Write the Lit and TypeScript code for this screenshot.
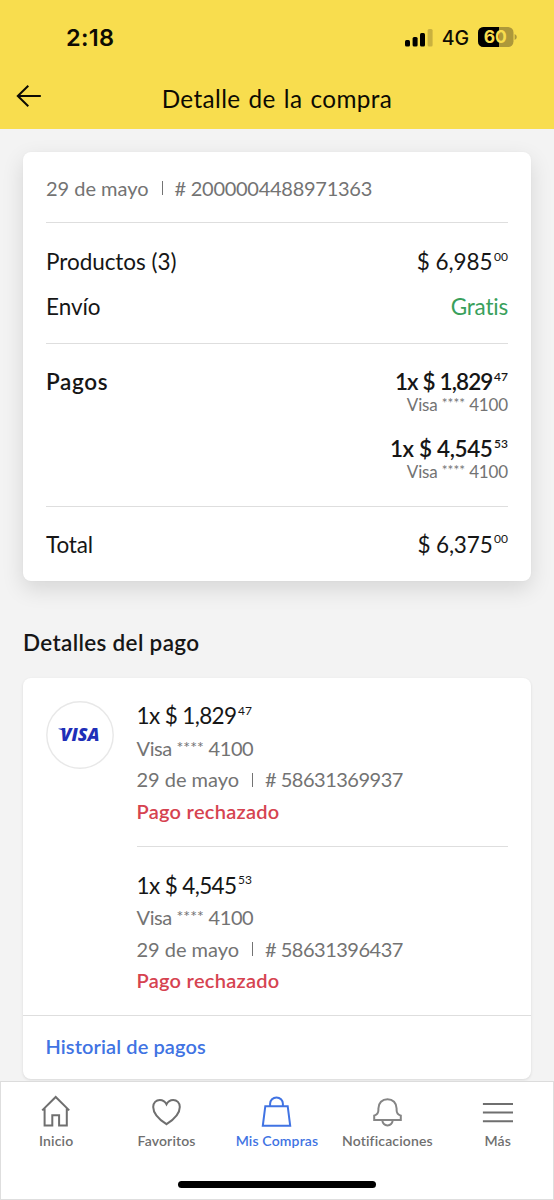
import { LitElement, html, svg, css, TemplateResult } from "lit";
import { customElement } from "lit/decorators.js";

interface Payment {
  whole: string;
  cents: string;
  operation: string;
}

const payments: Payment[] = [
  { whole: "1,829", cents: "47", operation: "58631369937" },
  { whole: "4,545", cents: "53", operation: "58631396437" },
];

const icons: Record<string, TemplateResult> = {
  home: svg`<path d="M1.2 15.4 14.7 2 28.2 15.4M3.6 13.2V30.6H11.3V20.3H18.1V30.6H25.8V13.2" />`,
  heart: svg`<path d="M15.5 29.2C9 25 2.2 18.6 2.2 11.9C2.2 7.8 5.1 5 8.8 5C11.8 5 14.1 6.6 15.5 9.3C16.9 6.6 19.2 5 22.2 5C25.9 5 28.8 7.8 28.8 11.9C28.8 18.6 22 25 15.5 29.2Z" />`,
  bag: svg`<path d="M4.3 11.2H26.7L29.2 30.8H1.8ZM9.1 11V8.8A6.4 6.4 0 0 1 21.9 8.8V11" />`,
  bell: svg`<path d="M2.2 25V20.6C5.6 19.6 6.4 18.2 6.4 15V13.6C6.4 8 10.2 4.2 15.5 4.2S24.6 8 24.6 13.6V15C24.6 18.2 25.4 19.6 28.8 20.6V25ZM10.2 25.2C10.7 28.5 12.6 30.4 15.5 30.4S20.3 28.5 20.8 25.2" />`,
  menu: svg`<path d="M.9 8.9H31M.9 17.6H31M.9 26.3H31" />`,
};

const tabs = [
  { icon: "home", label: "Inicio" },
  { icon: "heart", label: "Favoritos" },
  { icon: "bag", label: "Mis Compras" },
  { icon: "bell", label: "Notificaciones" },
  { icon: "menu", label: "Más" },
];

@customElement("app-root")
export class AppRoot extends LitElement {
  static styles = css`
    :host {
      display: flex;
      flex-direction: column;
      box-sizing: border-box;
      width: 554px;
      height: 1200px;
      overflow: hidden;
      background: #f3f3f3;
      color: #161616;
      font-family: Lato, "Open Sans", sans-serif;
      font-size: 22.5px;
      font-variant-ligatures: none;
      white-space: nowrap;
    }
    * { box-sizing: border-box; }
    svg { display: block; flex: none; }

    .header { height: 129px; flex: none; background: #f8dd4e; color: #0d0b03; }
    .status {
      display: flex;
      justify-content: space-between;
      align-items: center;
      height: 75px;
      padding: 0 37px 0 66px;
      font-family: Inter, sans-serif;
    }
    .time { font-size: 23.5px; font-weight: 600; letter-spacing: 0.3px; }
    .signals { display: flex; align-items: center; }
    .network { margin-left: 9px; font-size: 19.5px; font-weight: 500; letter-spacing: -0.1px; }
    .battery { margin: -1px 0 0 9px; }
    .titlebar { display: grid; grid-template-columns: 60px 1fr 60px; align-items: center; height: 46px; }
    .back { margin: -4px 0 0 16px; }
    .title { text-align: center; font-size: 24.3px; letter-spacing: 0.4px; word-spacing: 1.4px; }

    .content { flex: 1; min-height: 0; padding: 23px 23px 0; }
    .card { background: #fff; border-radius: 8px; }
    .summary { height: 429px; padding: 0 23px; box-shadow: 0 8px 22px rgba(0, 0, 0, 0.12), 0 0 2px rgba(0, 0, 0, 0.04); }
    .row { display: flex; justify-content: space-between; align-items: center; }
    .rule { height: 1px; background: #dedede; }

    .meta { display: flex; align-items: center; color: #737373; font-size: 20px; letter-spacing: -0.02px; }
    .bar { width: 1px; height: 14px; margin: 0 12px 0 13px; background: #737373; }
    .order { height: 70px; padding-top: 1px; }
    .number { letter-spacing: -0.27px; }
    .lines { padding: 15.5px 0 0; height: 120px; }
    .lines .row { height: 45.5px; letter-spacing: -0.05px; }
    .free { color: #39a05b; letter-spacing: -0.2px; }
    .strong { font-weight: 600; }
    .paid { display: flex; justify-content: space-between; height: 162px; padding-top: 22px; line-height: 32px; }
    .paid .strong { letter-spacing: 0.65px; }
    .charges { display: flex; flex-direction: column; align-items: flex-end; gap: 20.5px; }
    .charge { text-align: right; }
    .charge .amount { font-weight: 600; letter-spacing: -0.35px; }
    .charge:first-child .amount { letter-spacing: -0.85px; }
    .charge .card-name { line-height: 14.5px; font-size: 17px; letter-spacing: -0.15px; }
    .total { height: 74px; letter-spacing: -0.15px; }
    .cents { margin-left: 1.5px; font-size: 12px; line-height: 0; letter-spacing: 0; vertical-align: 9.2px; }
    .card-name { color: #737373; }
    .stars { font-size: 0.8em; vertical-align: 3.5px; line-height: 0; letter-spacing: 0; }

    .heading { height: 97px; padding-top: 45.5px; line-height: 32px; font-weight: 600; letter-spacing: 0.33px; }

    .details { height: 401px; box-shadow: 0 1px 3px rgba(0, 0, 0, 0.11); }
    .detail-body { display: flex; height: 337px; padding: 23px 23px 0; }
    .brand { margin: 0 23px 0 -0.5px; }
    .logo { font: italic 800 17.5px "Open Sans", sans-serif; }
    .entries { flex: 1; }
    .entry { height: 145px; }
    .entry + .rule { margin-bottom: 23.5px; }
    .entry .amount { height: 31.5px; line-height: 30px; letter-spacing: -0.62px; }
    .entry .card-name { height: 31.5px; line-height: 30.5px; font-size: 20px; letter-spacing: -0.4px; }
    .entry .meta { height: 31.5px; line-height: 31px; }
    .entry .number { letter-spacing: -0.5px; }
    .rejected { line-height: 31px; font-size: 20px; font-weight: 600; color: #d64350; letter-spacing: 0.28px; }
    .history {
      display: flex;
      align-items: center;
      height: 64px;
      padding: 0 22.5px 3px;
      border-top: 1px solid #dedede;
      color: #4073e3;
      font-size: 20px;
      font-weight: 600;
      letter-spacing: 0.1px;
    }

    .tabbar {
      position: relative;
      height: 119px;
      flex: none;
      background: #fff;
      border: 1px solid #dedede;
      border-top: 1.5px solid #dcdcdc;
    }
    .tabs { display: grid; grid-template-columns: repeat(5, 1fr); padding-top: 13px; }
    .tab { display: flex; flex-direction: column; align-items: center; color: #6f6f6f; font-size: 14px; font-weight: 600; letter-spacing: 0.15px; }
    .tab.bag { color: #4073e3; }
    .label { line-height: 20px; margin-top: 3px; }
    .glyph { fill: none; stroke: currentColor; stroke-width: 2; }
    .bell .glyph { stroke: #858585; }
    .indicator { width: 198px; height: 7px; margin: 30px auto 0; border-radius: 4px; background: #000; }
  `;

  private amount(prefix: string, whole: string, cents: string) {
    return html`<div class="amount">${prefix}$ ${whole}<span class="cents">${cents}</span></div>`;
  }

  private cardName() {
    return html`<div class="card-name">Visa <span class="stars">****</span> 4100</div>`;
  }

  private meta(number: string, cls = "") {
    return html`<div class="meta ${cls}">
      <span>29 de mayo</span><span class="bar"></span><span class="number"># ${number}</span>
    </div>`;
  }

  private entry(p: Payment) {
    return html`<div class="entry">
      ${this.amount("1x ", p.whole, p.cents)} ${this.cardName()} ${this.meta(p.operation)}
      <div class="rejected">Pago rechazado</div>
    </div>`;
  }

  render() {
    return html`
      <header class="header">
        <div class="status">
          <span class="time">2:18</span>
          <div class="signals">
            <svg width="28" height="18" viewBox="0 0 28 18">
              <rect x="0" y="11" width="5" height="6.5" rx="1.5" />
              <rect x="7.6" y="8" width="5" height="9.5" rx="1.5" />
              <rect x="15" y="4" width="5" height="13.5" rx="1.5" />
              <rect x="22.6" y="0" width="5" height="17.5" rx="1.5" fill="#c9b13f" />
            </svg>
            <span class="network">4G</span>
            <svg class="battery" width="39" height="20" viewBox="0 0 39 20">
              <rect width="35.5" height="20" rx="5.5" fill="#ad983a" />
              <path d="M21 0V20H5.5A5.5 5.5 0 0 1 0 14.5V5.5A5.5 5.5 0 0 1 5.5 0Z" />
              <path d="M36.6 7Q38.8 8 38.8 10T36.6 13Z" fill="#ad983a" />
              <text x="17.3" y="16.2" font-size="17.5" font-weight="700" text-anchor="middle" fill="#f8dd4e">60</text>
            </svg>
          </div>
        </div>
        <div class="titlebar">
          <svg class="back" width="26" height="24" viewBox="0 0 26 24" fill="none" stroke="#0d0b03" stroke-width="2">
            <path d="M12.3 1.8 1.8 12 12.3 22.2M1.8 12H24.8" />
          </svg>
          <div class="title">Detalle de la compra</div>
        </div>
      </header>

      <main class="content">
        <section class="card summary">
          ${this.meta("2000004488971363", "order")}
          <div class="rule"></div>
          <div class="lines">
            <div class="row"><span>Productos (3)</span>${this.amount("", "6,985", "00")}</div>
            <div class="row"><span>Envío</span><span class="free">Gratis</span></div>
          </div>
          <div class="rule"></div>
          <div class="paid">
            <span class="strong">Pagos</span>
            <div class="charges">
              ${payments.map((p) => html`<div class="charge">${this.amount("1x ", p.whole, p.cents)}${this.cardName()}</div>`)}
            </div>
          </div>
          <div class="rule"></div>
          <div class="row total"><span>Total</span>${this.amount("", "6,375", "00")}</div>
        </section>

        <div class="heading">Detalles del pago</div>

        <section class="card details">
          <div class="detail-body">
            <svg class="brand" width="68" height="68" viewBox="0 0 68 68">
              <circle cx="34" cy="34" r="33.2" fill="#fff" stroke="#e8e8e8" stroke-width="1.4" />
              <text class="logo" x="14.5" y="40.4" textLength="39" lengthAdjust="spacingAndGlyphs" fill="#1f2fb8">VISA</text>
              <path d="M12.5 27.6H18.5L19.5 31.5Q16.5 28.6 12.5 28Z" fill="#1f2fb8" />
            </svg>
            <div class="entries">
              ${this.entry(payments[0])}
              <div class="rule"></div>
              ${this.entry(payments[1])}
            </div>
          </div>
          <div class="history">Historial de pagos</div>
        </section>
      </main>

      <nav class="tabbar">
        <div class="tabs">
          ${tabs.map(
            (t) => html`<div class="tab ${t.icon}">
              <svg class="glyph" width="31" height="33" viewBox="0 0 31 33">${icons[t.icon]}</svg>
              <span class="label">${t.label}</span>
            </div>`
          )}
        </div>
        <div class="indicator"></div>
      </nav>
    `;
  }
}
